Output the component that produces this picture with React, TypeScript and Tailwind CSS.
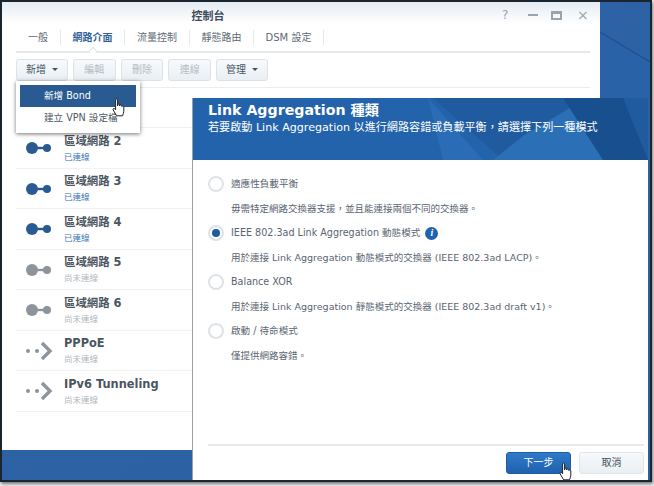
const FONT = '"DejaVu Sans", "Noto Sans CJK TC", sans-serif';

const TABS = [
  { label: '一般', width: 'w-[45px]' },
  { label: '網路介面', width: 'w-[64px]', active: true },
  { label: '流量控制', width: 'w-[65px]' },
  { label: '靜態路由', width: 'w-[64px]' },
  { label: 'DSM 設定', width: 'w-[70px]' },
];

// the first row sits behind the open menu, so it draws nothing
const ROWS = [
  { name: '區域網路 2', status: '已連線', on: true, kind: 'lan' },
  { name: '區域網路 3', status: '已連線', on: true, kind: 'lan' },
  { name: '區域網路 4', status: '已連線', on: true, kind: 'lan' },
  { name: '區域網路 5', status: '尚未連線', on: false, kind: 'lan' },
  { name: '區域網路 6', status: '尚未連線', on: false, kind: 'lan' },
  { name: 'PPPoE', status: '尚未連線', on: false, kind: 'tunnel' },
  { name: 'IPv6 Tunneling', status: '尚未連線', on: false, kind: 'tunnel' },
];

const OPTIONS = [
  { label: '適應性負載平衡', desc: '毋需特定網路交換器支援，並且能連接兩個不同的交換器。' },
  { label: 'IEEE 802.3ad Link Aggregation 動態模式', desc: '用於連接 Link Aggregation 動態模式的交換器 (IEEE 802.3ad LACP)。', checked: true, info: true },
  { label: 'Balance XOR', desc: '用於連接 Link Aggregation 靜態模式的交換器 (IEEE 802.3ad draft v1)。' },
  { label: '啟動 / 待命模式', desc: '僅提供網路容錯。' },
];

function LanIcon({ color }: { color: string }) {
  return (
    <svg width="28" height="14" viewBox="0 0 28 14" fill={color}>
      <circle cx="7" cy="7" r="6" />
      <rect x="10" y="5.8" width="10" height="2.4" />
      <circle cx="22" cy="7" r="4" />
    </svg>
  );
}

function TunnelIcon() {
  return (
    <svg width="28" height="20" viewBox="0 0 28 20" fill="#8d949c">
      <circle cx="3" cy="10" r="2" />
      <circle cx="12" cy="10" r="2" />
      <path d="M17 2 L25 10 L17 18" fill="none" stroke="#8d949c" strokeWidth="3.4" />
    </svg>
  );
}

function HandCursor({ className }: { className: string }) {
  return (
    <svg className={className} width="14" height="20" viewBox="0 0 14 20">
      <path
        d="M3.6 1.8c0-1.2 2-1.2 2 0V8l.3-1.4c.3-1 1.8-.8 1.8.2V8l.3-.8c.4-.9 1.8-.6 1.8.4v1l.3-.4c.5-.7 1.7-.3 1.7.6v4.4c0 2-.9 3-1.3 4.6H4.6L1.2 12c-.7-1.3.8-2.2 1.6-1.2l.8 1Z"
        fill="#fff"
        stroke="#222"
        strokeWidth="1"
        strokeLinejoin="round"
      />
    </svg>
  );
}

function ToolButton({ label, disabled, caret, width }: { label: string; disabled?: boolean; caret?: boolean; width: string }) {
  return (
    <div
      className={`flex h-[22px] items-center justify-center gap-1 rounded-[3px] border border-[#dbe3ea] bg-gradient-to-b from-[#f8fafc] to-[#e9eff4] text-[10px] ${width} ${
        disabled ? 'text-[#b4bcc4]' : 'text-[#45525f]'
      }`}
    >
      {label}
      {caret && <span className="ml-0.5 h-0 w-0 border-x-[3px] border-t-[3px] border-x-transparent border-t-[#45525f]" />}
    </div>
  );
}

function FooterButton({ label, primary }: { label: string; primary?: boolean }) {
  return (
    <div
      className={`flex h-[22px] w-[65px] items-center justify-center rounded-[3px] text-[10px] ${
        primary
          ? 'border border-[#1c5ca3] bg-gradient-to-b from-[#2f79c9] to-[#1f62ae] text-white'
          : 'border border-[#dfe5ea] bg-gradient-to-b from-[#f7f9fb] to-[#eaeff3] text-[#45525f]'
      }`}
    >
      {label}
    </div>
  );
}

function OptionRow({ label, desc, checked, info }: { label: string; desc: string; checked?: boolean; info?: boolean }) {
  return (
    <div className="flex flex-col">
      <div className="flex h-[24.5px] items-center">
        <span className="flex h-[16px] w-[16px] items-center justify-center rounded-full border-2 border-[#dde3e8] bg-white">
          {checked && <span className="h-2 w-2 rounded-full bg-[#1f5c9f]" />}
        </span>
        <span className="ml-[7px] text-[9.6px] text-[#5a6571]">{label}</span>
        {info && (
          <span
            className="ml-[5px] flex h-[13px] w-[13px] items-center justify-center rounded-full bg-[#1f62ae] text-[10px] font-bold italic leading-none text-white"
            style={{ fontFamily: '"Liberation Serif", serif' }}
          >
            i
          </span>
        )}
      </div>
      <div className="flex h-[24.5px] items-center pl-[23px] text-[9.5px] text-[#5a6571]">{desc}</div>
    </div>
  );
}

export default function App() {
  return (
    <div className="relative h-[486px] w-[654px] overflow-hidden bg-[#f1f1f1]" style={{ fontFamily: FONT }}>
      <div className="relative h-[482px] w-[652px] overflow-hidden border-2 border-[#1b2530] bg-gradient-to-br from-[#2f66ab] to-[#2a5f9f] shadow-[1px_2px_3px_#777]">
        {/* wallpaper streaks right of the window */}
        <svg className="absolute left-[598px] top-0" width="50" height="96" viewBox="0 0 50 96">
          <polygon points="0,30 50,58 50,96 0,96" fill="#2a62a8" />
          <line x1="0" y1="30" x2="50" y2="60" stroke="#1e5291" strokeWidth="1.2" />
        </svg>

        {/* control panel window */}
        <div className="absolute left-0 top-0 flex h-[448px] w-[598px] flex-col bg-white">
          <div className="relative flex h-[22px] items-center justify-center bg-gradient-to-b from-[#e6ecf3] to-[#ffffff] pr-[10px] pt-2 text-[11px] font-bold text-[#3e4d5e]">
            <span className="-ml-[176px]">控制台</span>
            <div className="absolute right-[11px] top-[6px] flex items-center text-[#9aa4af]">
              <span className="w-[10px] text-[12px] font-normal leading-none">?</span>
              <span className="ml-[16px] h-[2px] w-[10px] bg-[#9aa4af]" />
              <span className="ml-[13px] h-[9px] w-[11px] border-2 border-t-[3px] border-[#9aa4af]" />
              <span className="ml-[15px] w-[12px] text-[14px] font-normal leading-none">×</span>
            </div>
          </div>

          <div className="ml-[14px] mr-[10px] flex h-[29px] items-center border-b-2 border-[#e6e9ec]">
            {TABS.map((t) => (
              <div
                key={t.label}
                className={`relative flex h-[15px] items-center justify-center border-r border-[#e6e9ec] text-[10px] ${t.width} ${
                  t.active ? 'font-bold text-[#2f5f96]' : 'text-[#5d6a76]'
                }`}
              >
                {t.label}
                {t.active && (
                  <span className="absolute bottom-[-9px] left-1/2 h-[6px] w-[6px] -translate-x-1/2 rotate-45 border-l border-t border-[#dfe3e7] bg-white" />
                )}
              </div>
            ))}
          </div>

          <div className="ml-[14px] mr-[10px] flex h-[35px] items-center gap-[5px] border-b border-[#eceff1] pb-[1px]">
            <ToolButton label="新增" caret width="w-[52px]" />
            <ToolButton label="編輯" disabled width="w-[42.7px]" />
            <ToolButton label="刪除" disabled width="w-[42.7px]" />
            <ToolButton label="連線" disabled width="w-[42.7px]" />
            <ToolButton label="管理" caret width="w-[52px]" />
          </div>

          <div className="ml-[14px] mr-[10px] flex flex-col">
            <div className="h-[40px] shrink-0 border-b border-[#f0f2f4]" />
            {ROWS.map((r) => (
              <div key={r.name} className="flex h-[40.5px] shrink-0 items-center border-b border-[#f0f2f4]">
                <div className="flex w-[48px] justify-start pl-[9px] pt-[1px]">
                  {r.kind === 'lan' ? <LanIcon color={r.on ? '#2a5a92' : '#8d949c'} /> : <TunnelIcon />}
                </div>
                <div className="flex flex-col pt-[2px]">
                  <span className="text-[11.4px] font-bold leading-[17px] text-[#4b5560]">{r.name}</span>
                  <span className={`text-[8.5px] leading-[15px] ${r.on ? 'text-[#3c76b5]' : 'text-[#b1b7bd]'}`}>{r.status}</span>
                </div>
              </div>
            ))}
          </div>
        </div>

        {/* wizard dialog */}
        <div className="absolute left-[190px] top-[96px] flex h-[384px] w-[456px] flex-col border-l border-[#9aa0a6] bg-white">
          <div className="relative h-[62px] overflow-hidden bg-[#2363ab] pl-[15px] pt-[3px] text-white">
            <svg className="absolute inset-0" width="455" height="62" viewBox="0 0 455 62">
              <polygon points="240,0 455,0 455,62 310,62" fill="#1f5b9e" />
              <polygon points="235,0 290,62 250,62" fill="#2a6cb5" />
              <polygon points="330,38 380,8 410,62 300,62" fill="#2b6fb6" />
              <polygon points="370,0 430,0 455,62 410,62" fill="#18508f" />
            </svg>
            <div className="relative text-[14.2px] font-bold leading-[19px]">Link Aggregation 種類</div>
            <div className="relative text-[11.1px] leading-[15px]">若要啟動 Link Aggregation 以進行網路容錯或負載平衡，請選擇下列一種模式</div>
          </div>
          <div className="flex flex-1 flex-col px-[15px] pt-[12px]">
            {OPTIONS.map((o) => (
              <OptionRow key={o.label} {...o} />
            ))}
          </div>
          <div className="ml-[15px] mr-[4px] flex h-[38px] items-center justify-end gap-2 border-t-2 border-[#e6e9ec] pb-[3px]">
            <FooterButton label="下一步" primary />
            <FooterButton label="取消" />
          </div>
        </div>

        {/* add menu */}
        <div className="absolute left-[14px] top-[79px] flex h-[52px] w-[124px] flex-col gap-[1px] bg-white p-1 shadow-[0_1px_4px_rgba(0,0,0,0.55)]">
          <div className="flex h-[22px] items-center bg-[#2a5a92] pl-6 text-[9.6px] text-white">新增 Bond</div>
          <div className="flex h-[22px] items-center pl-6 text-[9.6px] text-[#4d5965]">建立 VPN 設定檔</div>
        </div>

        <HandCursor className="absolute left-[110px] top-[96px]" />
        <HandCursor className="absolute left-[557px] top-[460px]" />
      </div>
    </div>
  );
}
